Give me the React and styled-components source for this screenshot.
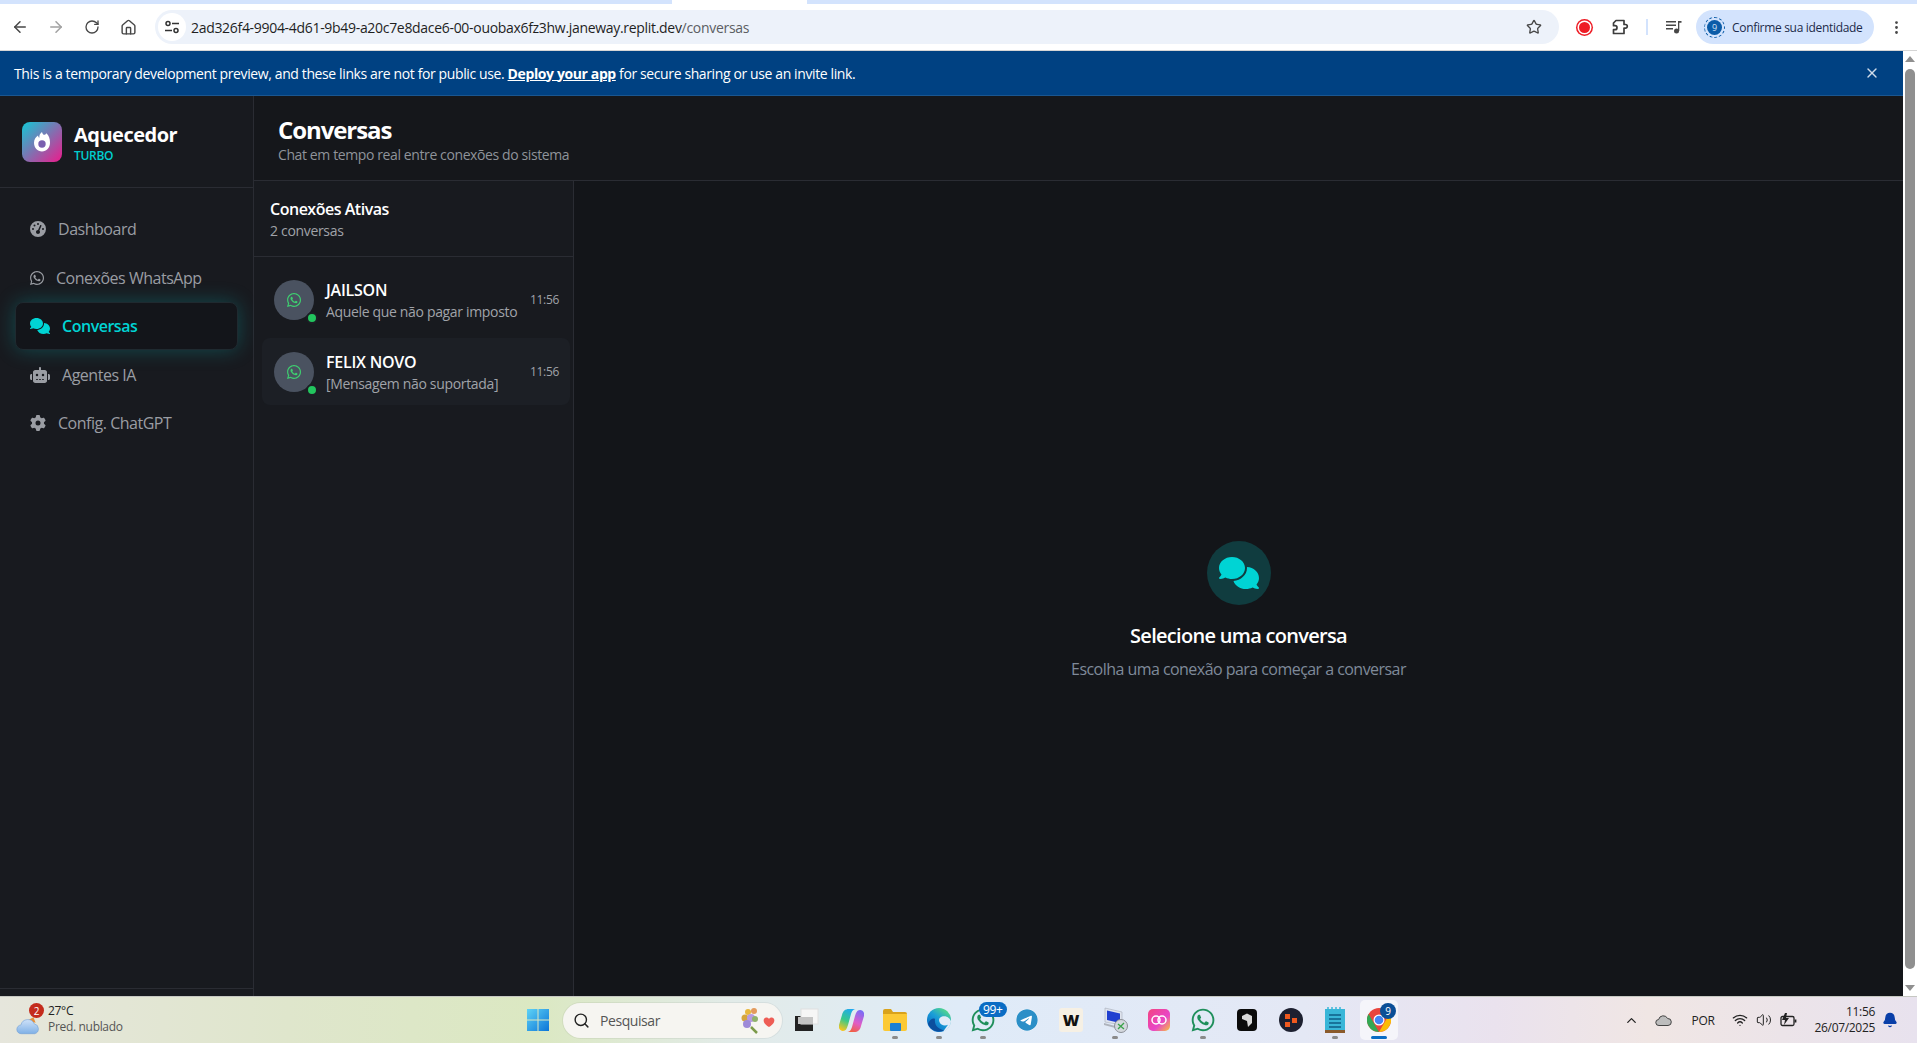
import React from 'react';
import styled, { createGlobalStyle } from 'styled-components';
import { ArrowLeft, ArrowRight, RotateCw, Home, Star, MoreVertical, X, Search, ChevronUp, Wifi, Volume2, Bell } from 'lucide-react';
import { FaGaugeHigh, FaWhatsapp, FaComments, FaRobot, FaGear, FaTelegram } from 'react-icons/fa6';

const UI_FONT = '"Open Sans", "Noto Sans", sans-serif';

const GlobalStyle = createGlobalStyle`
	html, body {
		margin: 0;
		padding: 0;
		height: 100%;
		overflow: hidden;
		font-family: ${UI_FONT};
		letter-spacing: -0.02em;
	}
	#root {
		height: 100%;
	}
	* {
		box-sizing: border-box;
	}
`;

const navItems = [
	{ label: 'Dashboard', icon: FaGaugeHigh, w: 16 },
	{ label: 'Conexões WhatsApp', icon: FaWhatsapp, w: 14 },
	{ label: 'Conversas', icon: FaComments, w: 20, active: true },
	{ label: 'Agentes IA', icon: FaRobot, w: 20 },
	{ label: 'Config. ChatGPT', icon: FaGear, w: 16 },
];

const conversations = [
	{ name: 'JAILSON', last: 'Aquele que não pagar imposto', time: '11:56' },
	{ name: 'FELIX NOVO', last: '[Mensagem não suportada]', time: '11:56', selected: true },
];

function App() {
	return (
		<Screen>
			<GlobalStyle />
			<BrowserBar />
			<Body>
				<Page>
					<Banner>
						<span>
							This is a temporary development preview, and these links are not for public use. <a>Deploy your app</a> for secure sharing or use an invite link.
						</span>
						<X size={16} color='#cfdcea' />
					</Banner>
					<Shell>
						<Sidebar />
						<Main>
							<MainHeader>
								<h1>Conversas</h1>
								<p>Chat em tempo real entre conexões do sistema</p>
							</MainHeader>
							<Columns>
								<ConversationList />
								<EmptyChat>
									<EmptyIcon>
										<FaComments size={40} />
									</EmptyIcon>
									<h2>Selecione uma conversa</h2>
									<p>Escolha uma conexão para começar a conversar</p>
								</EmptyChat>
							</Columns>
						</Main>
					</Shell>
				</Page>
				<Scrollbar>
					<ArrowUp />
					<Thumb />
					<ArrowDown />
				</Scrollbar>
			</Body>
			<Taskbar />
		</Screen>
	);
}

const BrowserBar = () => (
	<div>
		<TabStrip>
			<TabPiece />
		</TabStrip>
		<Toolbar>
			<ToolButton $w={36}><ArrowLeft size={18} /></ToolButton>
			<ToolButton $w={36} $dim><ArrowRight size={18} /></ToolButton>
			<ToolButton $w={36}><RotateCw size={16} /></ToolButton>
			<ToolButton $w={36}><Home size={17} /></ToolButton>
			<Omnibox>
				<TuneBadge>
					<svg width='16' height='14' viewBox='0 0 16 14' fill='none' stroke='#333' strokeWidth='1.5'>
						<circle cx='4' cy='3.500' r='2' />
						<path d='M8 3.500h7M1 10.500h7' />
						<circle cx='12' cy='10.500' r='2' />
					</svg>
				</TuneBadge>
				<Url>
					2ad326f4-9904-4d61-9b49-a20c7e8dace6-00-ouobax6fz3hw.janeway.replit.dev<span>/conversas</span>
				</Url>
				<Star size={16} />
			</Omnibox>
			<ToolButton $w={36} $ml={7}><RecordDot /></ToolButton>
			<ToolButton $w={36}>
				<svg width='18' height='18' viewBox='0 0 18 18' fill='none' stroke='#3c3c3c' strokeWidth='1.7' strokeLinejoin='round'>
					<path d='M5 2.500h8v4h1.500a1.700 1.700 0 0 1 0 3.600H13v5.400H2.500v-3.800H4a2 2 0 0 0 0-4H2.500V5z' />
				</svg>
			</ToolButton>
			<Divider />
			<ToolButton $w={36}>
				<svg width='16' height='14' viewBox='0 0 16 14' fill='#474747'>
					<path d='M0 1h10v1.500H0zM0 4.500h10V6H0zM0 8h7v1.500H0z' />
					<circle cx='10.500' cy='11' r='2.500' />
					<path d='M12 11V1h3.500v1.800H13.300V11z' />
				</svg>
			</ToolButton>
			<ProfilePill>
				<ProfileAvatar>9</ProfileAvatar>
				Confirme sua identidade
			</ProfilePill>
			<ToolButton $w={34} $ml={5}><MoreVertical size={17} /></ToolButton>
		</Toolbar>
	</div>
);

const Sidebar = () => (
	<SideColumn>
		<Brand>
			<BrandLogo>
				<svg width='20' height='22' viewBox='0 0 20 22'>
					<path fill='#fff' d='M10 1c.6 2.600 2 3.400 3.400 2.400.4-.3.7-.7.9-1.100C16.900 4.500 18 7.700 18 11.500 18 16.900 14.500 20.500 10 20.500S2 16.900 2 11.800c0-3.600 2-5.800 4-7.300.2 1.200.7 1.900 1.400 2.200C7.100 4.500 8 2.500 10 1z' />
					<circle cx='10' cy='13' r='3.700' fill='#7b5fb0' />
				</svg>
			</BrandLogo>
			<BrandText>
				<BrandName>Aquecedor</BrandName>
				<BrandTag>TURBO</BrandTag>
			</BrandText>
		</Brand>
		<Nav>
			{navItems.map((item) => (
				<NavItem key={item.label} $active={item.active}>
					<NavIcon $w={item.w}>
						<item.icon />
					</NavIcon>
					{item.label}
				</NavItem>
			))}
		</Nav>
		<SideFooter />
	</SideColumn>
);

const ConversationList = () => (
	<ListColumn>
		<ListHeader>
			<h3>Conexões Ativas</h3>
			<p>2 conversas</p>
		</ListHeader>
		<Rows>
			{conversations.map((c) => (
				<Row key={c.name} $selected={c.selected}>
					<Avatar>
						<FaWhatsapp size={16} color='#3ecf70' />
						<OnlineDot />
					</Avatar>
					<RowText>
						<strong>{c.name}</strong>
						<span>{c.last}</span>
					</RowText>
					<RowTime>{c.time}</RowTime>
				</Row>
			))}
		</Rows>
	</ListColumn>
);

const Taskbar = () => (
	<Bar>
		<Weather>
			<WeatherIcon>
				<svg width='24' height='20' viewBox='0 0 22 18'>
					<defs>
						<linearGradient id='cl' x1='0' y1='0' x2='0' y2='1'>
							<stop offset='0' stopColor='#cfe2f8' />
							<stop offset='1' stopColor='#7fb0e6' />
						</linearGradient>
					</defs>
					<path fill='#e8903a' d='M10 5l6-3 2 5z' />
					<path fill='url(#cl)' stroke='#6c9bd4' strokeWidth='.5' d='M5 17a4 4 0 0 1-.5-8 6.500 6.500 0 0 1 12.300-1 4.600 4.600 0 0 1 .2 9z' />
				</svg>
				<WeatherBadge>2</WeatherBadge>
			</WeatherIcon>
			<WeatherText>
				<span>27°C</span>
				<small>Pred. nublado</small>
			</WeatherText>
		</Weather>
		<TaskIcons>
			<Tile>
				<svg width='24' height='24' viewBox='0 0 24 24'>
					<defs>
						<linearGradient id='win' x1='0' y1='0' x2='1' y2='1'>
							<stop offset='0' stopColor='#5fd3f5' />
							<stop offset='1' stopColor='#0b74d8' />
						</linearGradient>
					</defs>
					<path fill='url(#win)' d='M1 1h10.500v10.500H1zM12.500 1H23v10.500H12.500zM1 12.500h10.500V23H1zM12.500 12.500H23V23H12.500z' />
				</svg>
			</Tile>
			<SearchBox>
				<Search size={17} color='#222' />
				<span>Pesquisar</span>
				<svg width='38' height='28' viewBox='0 0 38 28'>
					<circle cx='8' cy='6' r='3' fill='#e7b73c' />
					<circle cx='14' cy='5' r='3' fill='#e39a5c' />
					<circle cx='5' cy='12' r='3.500' fill='#d6a53c' />
					<circle cx='11' cy='12' r='4' fill='#b79be0' />
					<circle cx='7' cy='18' r='4' fill='#9e8ad8' />
					<circle cx='15' cy='13' r='3' fill='#8fb26a' />
					<path d='M11 21l6 6' stroke='#7c9a4a' strokeWidth='2.500' />
					<path fill='#ee5d55' d='M29 21c-5-3-6-6-5-8 1-2 4-2 5 0 1-2 4-2 5 0 1 2 0 5-5 8z' />
				</svg>
			</SearchBox>
			<Tile>
				<svg width='26' height='24' viewBox='0 0 26 24'>
					<rect x='1' y='8' width='18' height='15' fill='#222' />
					<rect x='7' y='1' width='17' height='15' fill='#f6f6f6' stroke='#e0e0e0' />
					<rect x='4' y='9' width='15' height='7' fill='#c4c4c4' />
				</svg>
			</Tile>
			<Tile>
				<svg width='25' height='25' viewBox='0 0 25 25'>
					<defs>
						<linearGradient id='copa' x1='0.7' y1='0' x2='0.3' y2='1'>
							<stop offset='0' stopColor='#1fa8f2' />
							<stop offset='0.55' stopColor='#39c98a' />
							<stop offset='1' stopColor='#f5c51e' />
						</linearGradient>
						<linearGradient id='copb' x1='0.7' y1='0' x2='0.3' y2='1'>
							<stop offset='0' stopColor='#7a6cf5' />
							<stop offset='0.55' stopColor='#e05cc8' />
							<stop offset='1' stopColor='#f2603c' />
						</linearGradient>
					</defs>
					<path fill='url(#copa)' d='M10 1h8c-4 0-5 2-6 5l-3 11c-1 3-2 6-5 6-3 0-5-3-4-6l3-10C4 3 6 1 10 1z' />
					<path fill='url(#copb)' d='M15 24H7c4 0 5-2 6-5l3-11c1-3 2-6 5-6 3 0 5 3 4 6l-3 10c-1 4-3 6-7 6z' />
				</svg>
			</Tile>
			<Tile $running>
				<svg width='24' height='22' viewBox='0 0 24 22'>
					<path fill='#d9a21b' d='M0 2a2 2 0 0 1 2-2h6l2 3h12a2 2 0 0 1 2 2v2H0z' />
					<path fill='#fcc934' d='M0 5h24v15a2 2 0 0 1-2 2H2a2 2 0 0 1-2-2z' />
					<rect x='7' y='14' width='11' height='8' rx='1' fill='#1a7fd4' />
				</svg>
			</Tile>
			<Tile $running>
				<svg width='24' height='24' viewBox='0 0 24 24'>
					<defs>
						<linearGradient id='edge' x1='0.2' y1='0.9' x2='0.8' y2='0.1'>
							<stop offset='0' stopColor='#0a6cc4' />
							<stop offset='0.55' stopColor='#1a9ed8' />
							<stop offset='1' stopColor='#52d68e' />
						</linearGradient>
					</defs>
					<circle cx='12' cy='12' r='12' fill='url(#edge)' />
					<path fill='#e1ebf8' d='M24 13.500c-1-4-5-6-9-5-3 1-3.500 3.500-2.500 5.500 1 3 5 4.500 8.500 2.800-1.500 2-2.500 4-5 6.700 4-1 7.500-5 8-10z' />
					<path fill='#0b4f9e' d='M8 11c-1 6 3 10 9 11.500-6 3-14-.5-16-7 2-4 5-6 7-4.500z' />
				</svg>
			</Tile>
			<Tile $running>
				<FaWhatsapp size={26} color='#1f8f5b' />
				<CountBadge>99+</CountBadge>
			</Tile>
			<Tile>
				<RoundBlue><FaTelegram size={22} color='#2b8fc7' /></RoundBlue>
			</Tile>
			<Tile>
				<WTile>W</WTile>
			</Tile>
			<Tile $running>
				<svg width='25' height='26' viewBox='0 0 25 26'>
					<path fill='#dfe4ee' stroke='#9aa0ac' strokeWidth='.5' d='M2 1l17 4v13L2 15z' />
					<path fill='#1f3fd0' d='M4 3.500l13 3v9.500L4 13z' />
					<path fill='#aeb3bc' d='M1 16l15 4v2L1 18z' />
					<circle cx='18' cy='19' r='6.500' fill='#d4d8de' stroke='#8b8f96' />
					<path d='M15 22l3-3 3-3M15 17l6 5' stroke='#3aa34a' strokeWidth='1.300' />
				</svg>
			</Tile>
			<Tile>
				<svg width='22' height='22' viewBox='0 0 22 22'>
					<defs>
						<linearGradient id='cc' x1='0' y1='0' x2='1' y2='1'>
							<stop offset='0' stopColor='#f4447f' />
							<stop offset='0.6' stopColor='#e845c8' />
							<stop offset='1' stopColor='#f8c53a' />
						</linearGradient>
					</defs>
					<rect width='22' height='22' rx='5' fill='url(#cc)' />
					<circle cx='8' cy='11' r='4' fill='none' stroke='#fff' strokeWidth='1.500' />
					<circle cx='14' cy='11' r='4' fill='none' stroke='#fff' strokeWidth='1.500' />
				</svg>
			</Tile>
			<Tile $running>
				<FaWhatsapp size={26} color='#1f8f5b' />
			</Tile>
			<Tile>
				<svg width='20' height='22' viewBox='0 0 20 22'>
					<rect width='20' height='22' rx='4' fill='#0b0b0b' />
					<path fill='#d8d8d8' d='M5 7l5-2.500L15 7v7l-4 4-1-6-5-2z' />
				</svg>
			</Tile>
			<Tile>
				<svg width='24' height='24' viewBox='0 0 24 24'>
					<circle cx='12' cy='12' r='12' fill='#1d2030' />
					<rect x='6' y='6' width='5' height='5' fill='#f0591e' />
					<rect x='13' y='10' width='5' height='5' fill='#f0591e' />
					<rect x='6' y='14' width='5' height='5' fill='#f0591e' />
				</svg>
			</Tile>
			<Tile $running>
				<svg width='20' height='26' viewBox='0 0 20 26'>
					<rect y='2' width='20' height='22' fill='#39b6d8' />
					<rect y='23' width='20' height='3' fill='#8a5a2b' />
					<path d='M4 8h12M4 12h12M4 16h12M4 20h12' stroke='#0e5d86' strokeWidth='1.500' />
					<path d='M3 0v3M7 0v3M11 0v3M15 0v3' stroke='#39b6d8' strokeWidth='1.500' />
				</svg>
			</Tile>
			<Tile $current>
				<svg width='24' height='24' viewBox='0 0 24 24'>
					<circle cx='12' cy='12' r='12' fill='#e8453c' />
					<path fill='#34a853' d='M12 24A12 12 0 0 1 1.600 6l5.200 9L12 24z' />
					<path fill='#fbbc05' d='M12 24l5.200-9 5.200-9A12 12 0 0 1 12 24z' />
					<circle cx='12' cy='12' r='5.500' fill='#fff' />
					<circle cx='12' cy='12' r='4.300' fill='#4285f4' />
				</svg>
				<ChromeBadge>9</ChromeBadge>
			</Tile>
		</TaskIcons>
		<Tray>
			<TraySlot $w={34}><ChevronUp size={15} /></TraySlot>
			<TraySlot $w={30}>
				<svg width='17' height='12' viewBox='0 0 17 12'>
					<path fill='#bdbdbd' stroke='#444' strokeWidth='1' d='M4 11.500a3 3 0 0 1-.4-6 4.800 4.800 0 0 1 9-1 3.500 3.500 0 0 1 .4 7z' />
				</svg>
			</TraySlot>
			<TraySlot $w={50}>POR</TraySlot>
			<TraySlot $w={24}><Wifi size={16} /></TraySlot>
			<TraySlot $w={24}><Volume2 size={16} strokeWidth={1.5} /></TraySlot>
			<TraySlot $w={24}>
				<svg width='17' height='14' viewBox='0 0 17 14' fill='none' stroke='#222' strokeWidth='1.300'>
					<rect x='1' y='3.500' width='13' height='9' rx='1.500' />
					<path d='M15.500 6.500v3' strokeWidth='1.800' />
					<path d='M5 0L2 7h3l-1 5 5-7H6l1-5z' fill='#222' stroke='none' />
				</svg>
			</TraySlot>
			<Clock>
				<span>11:56</span>
				<span>26/07/2025</span>
			</Clock>
			<BellSlot><Bell size={16} color='#0a3fa8' fill='#0a3fa8' /></BellSlot>
		</Tray>
	</Bar>
);

const Screen = styled.div`
	display: flex;
	flex-direction: column;
	height: 1043px;
	width: 1917px;
	overflow: hidden;
`;

const TabStrip = styled.div`
	height: 4px;
	background: #d3e3fd;
	padding-left: 672px;
`;

const TabPiece = styled.div`
	width: 135px;
	height: 4px;
	background: #fff;
`;

const Toolbar = styled.div`
	height: 47px;
	background: #fff;
	border-bottom: 1px solid #d5d5d5;
	display: flex;
	align-items: center;
	padding: 0 4px 0 2px;
	color: #474747;
`;

const ToolButton = styled.div`
	width: ${({ $w }) => $w}px;
	margin-left: ${({ $ml }) => $ml || 0}px;
	display: flex;
	align-items: center;
	justify-content: center;
	flex-shrink: 0;
	opacity: ${({ $dim }) => ($dim ? 0.5 : 1)};
`;

const Omnibox = styled.div`
	width: 1404px;
	height: 34px;
	margin-left: 9px;
	background: #edf2fa;
	border-radius: 17px;
	display: flex;
	align-items: center;
	padding: 0 17px 0 3px;
	flex-shrink: 0;
`;

const TuneBadge = styled.div`
	width: 28px;
	height: 28px;
	border-radius: 50%;
	background: #fff;
	display: flex;
	align-items: center;
	justify-content: center;
`;

const Url = styled.div`
	flex: 1;
	margin-left: 5px;
	font-size: 14px;
	letter-spacing: -0.022em;
	color: #1f1f1f;

	span {
		color: #5b5e63;
	}
`;

const RecordDot = styled.div`
	width: 11px;
	height: 11px;
	border-radius: 50%;
	background: #ee1c25;
	box-shadow: 0 0 0 1.5px #fff, 0 0 0 3px #ee1c25;
`;

const Divider = styled.div`
	width: 2px;
	height: 16px;
	margin: 0 8px;
	background: #d3e3fd;
`;

const ProfilePill = styled.div`
	width: 178px;
	height: 34px;
	margin-left: 4px;
	border-radius: 17px;
	background: #d3e3fd;
	display: flex;
	align-items: center;
	gap: 10px;
	padding-left: 11px;
	font-size: 12px;
	color: #1c2a4a;
	white-space: nowrap;
	flex-shrink: 0;
`;

const ProfileAvatar = styled.div`
	width: 15px;
	height: 15px;
	border-radius: 50%;
	background: #0b5ca8;
	color: #cfe0f5;
	font-size: 9px;
	display: flex;
	align-items: center;
	justify-content: center;
	outline: 1px dashed #0b5ca8;
	outline-offset: 2px;
`;

const Body = styled.div`
	flex: 1;
	display: flex;
	min-height: 0;
`;

const Page = styled.div`
	flex: 1;
	display: flex;
	flex-direction: column;
	min-width: 0;
`;

const Banner = styled.div`
	height: 45px;
	flex-shrink: 0;
	background: #004182;
	border-bottom: 1px solid #1a5690;
	color: #fff;
	font-size: 14px;
	letter-spacing: -0.0275em;
	display: flex;
	align-items: center;
	justify-content: space-between;
	padding: 0 23px 0 14px;

	a {
		font-weight: 700;
		text-decoration: underline;
	}
`;

const Shell = styled.div`
	flex: 1;
	display: flex;
	min-height: 0;
`;

const SideColumn = styled.aside`
	width: 254px;
	flex-shrink: 0;
	display: flex;
	flex-direction: column;
	background: #181a1f;
	border-right: 1px solid #2a2c33;
`;

const Brand = styled.div`
	height: 92px;
	border-bottom: 1px solid #2a2c33;
	display: flex;
	align-items: center;
	gap: 12px;
	padding-left: 22px;
`;

const BrandLogo = styled.div`
	width: 40px;
	height: 40px;
	border-radius: 8px;
	background: linear-gradient(135deg, #12c9d6, #ee1a8c);
	display: flex;
	align-items: center;
	justify-content: center;
`;

const BrandText = styled.div`
	padding-top: 2px;
`;

const BrandName = styled.div`
	font-size: 20px;
	line-height: 26px;
	font-weight: 700;
	letter-spacing: -0.025em;
	color: #fff;
`;

const BrandTag = styled.div`
	font-size: 12px;
	line-height: 15px;
	font-weight: 600;
	color: #00cfd0;
`;

const Nav = styled.nav`
	flex: 1;
	display: flex;
	flex-direction: column;
	gap: 0.5px;
	padding: 17px 15px 0;
`;

const NavItem = styled.div`
	height: 48px;
	display: flex;
	align-items: center;
	gap: 12px;
	padding-left: 14px;
	font-size: 16px;
	letter-spacing: -0.03em;
	font-weight: ${({ $active }) => ($active ? 600 : 400)};
	color: ${({ $active }) => ($active ? '#00d4d4' : '#9a9da3')};
	border-radius: 8px;
	border: 1px solid transparent;
	${({ $active }) =>
		$active &&
		`
		background: #13151a;
		border-color: #1f2a30;
		box-shadow: 0 0 20px rgba(0, 212, 212, 0.26);
	`}
`;

const NavIcon = styled.span`
	display: inline-flex;

	svg {
		width: ${({ $w }) => $w}px;
		height: 16px;
	}
`;

const SideFooter = styled.div`
	height: 8px;
	border-top: 1px solid #2a2c33;
`;

const Main = styled.main`
	flex: 1;
	display: flex;
	flex-direction: column;
	min-width: 0;
	background: #131519;
`;

const MainHeader = styled.header`
	height: 85px;
	flex-shrink: 0;
	padding: 17px 24px 0;
	background: #15171b;
	border-bottom: 1px solid #2a2c33;

	h1 {
		margin: 0;
		font-size: 24px;
		line-height: 33px;
		font-weight: 700;
		letter-spacing: -0.045em;
		color: #fff;
	}

	p {
		margin: 0;
		font-size: 14px;
		line-height: 18px;
		letter-spacing: -0.028em;
		color: #8f939a;
	}
`;

const Columns = styled.div`
	flex: 1;
	display: flex;
	min-height: 0;
`;

const ListColumn = styled.section`
	width: 320px;
	flex-shrink: 0;
	background: #181a1f;
	border-right: 1px solid #2a2c33;
`;

const ListHeader = styled.div`
	height: 76px;
	padding: 16px 16px 0;
	border-bottom: 1px solid #2a2c33;

	h3 {
		margin: 0;
		font-size: 16px;
		line-height: 24px;
		font-weight: 600;
		letter-spacing: -0.03em;
		color: #fff;
	}

	p {
		margin: 0;
		font-size: 14px;
		line-height: 20px;
		color: #a0a3a9;
	}
`;

const Rows = styled.div`
	display: flex;
	flex-direction: column;
	gap: 5px;
	padding: 9px 3px 0 8px;
`;

const Row = styled.div`
	height: 67px;
	border-radius: 8px;
	display: flex;
	align-items: center;
	gap: 12px;
	padding: 0 11px 0 12px;
	background: ${({ $selected }) => ($selected ? '#1c1f25' : 'transparent')};
`;

const Avatar = styled.div`
	position: relative;
	width: 40px;
	height: 40px;
	border-radius: 50%;
	background: #4a5260;
	display: flex;
	align-items: center;
	justify-content: center;
	flex-shrink: 0;
`;

const OnlineDot = styled.span`
	position: absolute;
	right: -4px;
	bottom: -4px;
	width: 12px;
	height: 12px;
	border-radius: 50%;
	background: #22c55e;
	border: 2px solid #1c1f25;
`;

const RowText = styled.div`
	flex: 1;
	min-width: 0;
	display: flex;
	flex-direction: column;
	padding-top: 2px;

	strong {
		font-size: 16px;
		line-height: 23px;
		font-weight: 600;
		letter-spacing: -0.015em;
		color: #fff;
	}

	span {
		font-size: 14px;
		line-height: 20px;
		letter-spacing: -0.024em;
		color: #a0a3a9;
		white-space: nowrap;
	}
`;

const RowTime = styled.div`
	font-size: 12px;
	color: #a0a3a9;
`;

const EmptyChat = styled.div`
	flex: 1;
	display: flex;
	flex-direction: column;
	align-items: center;
	padding-top: 360px;

	h2 {
		margin: 16px 0 0;
		font-size: 20px;
		line-height: 30px;
		font-weight: 600;
		letter-spacing: -0.035em;
		color: #fff;
	}

	p {
		margin: 6px 0 0;
		font-size: 16px;
		line-height: 24px;
		letter-spacing: -0.034em;
		color: #7f8a99;
	}
`;

const EmptyIcon = styled.div`
	width: 64px;
	height: 64px;
	border-radius: 50%;
	background: #103c3f;
	color: #00d4d4;
	display: flex;
	align-items: center;
	justify-content: center;
`;

const Scrollbar = styled.div`
	width: 14px;
	flex-shrink: 0;
	background: #fff;
	display: flex;
	flex-direction: column;
	align-items: center;
	padding: 5px 0;
`;

const ArrowUp = styled.div`
	border: 5px solid transparent;
	border-top: 0;
	border-bottom: 6px solid #8f8f8f;
`;

const ArrowDown = styled.div`
	border: 5px solid transparent;
	border-bottom: 0;
	border-top: 6px solid #8f8f8f;
`;

const Thumb = styled.div`
	flex: 1;
	width: 10px;
	margin: 7px 0 16px;
	border-radius: 5px;
	background: #8f8f8f;
`;

const Bar = styled.footer`
	height: 47px;
	flex-shrink: 0;
	display: grid;
	grid-template-columns: 516px auto 1fr;
	align-items: center;
	border-top: 1px solid #c6c8c2;
	background: linear-gradient(90deg, #e6e6dc 0%, #dfe6cc 15%, #dbe8c2 28%, #e2ebe8 38%, #dfebf8 50%, #e4e8f5 68%, #eae2ee 78%, #f0e6e4 86%, #e8e2ee 100%);
	color: #222;
`;

const Weather = styled.div`
	display: flex;
	align-items: center;
	padding-left: 16px;
`;

const WeatherIcon = styled.div`
	position: relative;
	width: 32px;
	height: 30px;
	display: flex;
	align-items: flex-end;
`;

const WeatherBadge = styled.span`
	position: absolute;
	left: 13px;
	top: -2px;
	width: 15px;
	height: 15px;
	border-radius: 50%;
	background: #c42b1c;
	color: #fff;
	font-size: 10px;
	display: flex;
	align-items: center;
	justify-content: center;
`;

const WeatherText = styled.div`
	display: flex;
	flex-direction: column;
	margin-top: -2px;
	font-size: 12px;
	line-height: 16px;

	small {
		font-size: 12px;
		color: #555;
	}
`;

const TaskIcons = styled.div`
	display: flex;
	align-items: center;
`;

const Tile = styled.div`
	position: relative;
	width: ${({ $current }) => ($current ? 38 : 44)}px;
	height: ${({ $current }) => ($current ? 40 : 44)}px;
	margin: ${({ $current }) => ($current ? '0 3px' : 0)};
	display: flex;
	align-items: center;
	justify-content: center;
	border-radius: 5px;
	background: ${({ $current }) => ($current ? 'rgba(255, 255, 255, 0.6)' : 'transparent')};

	${({ $running }) =>
		$running &&
		`
		&::after {
			content: '';
			position: absolute;
			left: 19px;
			bottom: 3px;
			width: 6px;
			height: 3px;
			border-radius: 2px;
			background: #8a8a8a;
		}
	`}

	${({ $current }) =>
		$current &&
		`
		&::after {
			content: '';
			position: absolute;
			left: 11px;
			bottom: 1px;
			width: 16px;
			height: 3px;
			border-radius: 2px;
			background: #0a6cc4;
		}
	`}
`;

const SearchBox = styled.div`
	width: 219px;
	height: 35px;
	margin: 0 3px;
	border-radius: 18px;
	background: #f6f5f1;
	box-shadow: 0 0 0 1px rgba(0, 0, 0, 0.05);
	display: flex;
	align-items: center;
	gap: 10px;
	padding: 0 4px 0 10px;
	font-size: 14px;
	letter-spacing: -0.03em;
	color: #555;

	span {
		flex: 1;
	}
`;

const CountBadge = styled.span`
	position: absolute;
	top: 4px;
	left: 18px;
	padding: 0 4px;
	height: 15px;
	border-radius: 8px;
	background: #0a6cc4;
	color: #fff;
	font-size: 12px;
	line-height: 15px;
`;

const ChromeBadge = styled.span`
	position: absolute;
	top: 3px;
	right: 2px;
	width: 16px;
	height: 16px;
	border-radius: 50%;
	background: #0b4f96;
	color: #fff;
	font-size: 10px;
	display: flex;
	align-items: center;
	justify-content: center;
`;

const RoundBlue = styled.span`
	display: flex;
	background: #fff;
	border-radius: 50%;
`;

const WTile = styled.div`
	width: 24px;
	height: 24px;
	border-radius: 3px;
	background: #f6f0e4;
	color: #111;
	font-size: 16px;
	font-weight: 800;
	display: flex;
	align-items: center;
	justify-content: center;
`;

const Tray = styled.div`
	display: flex;
	align-items: center;
	padding-left: 213px;
	font-size: 12px;
`;

const TraySlot = styled.div`
	width: ${({ $w }) => $w}px;
	display: flex;
	align-items: center;
	justify-content: center;
	flex-shrink: 0;
	color: #222;
`;

const Clock = styled.div`
	flex: 1;
	display: flex;
	flex-direction: column;
	align-items: flex-end;
	font-size: 12px;
	line-height: 16px;
`;

const BellSlot = styled.div`
	width: 42px;
	padding-right: 12px;
	display: flex;
	justify-content: center;
`;

export default App;
